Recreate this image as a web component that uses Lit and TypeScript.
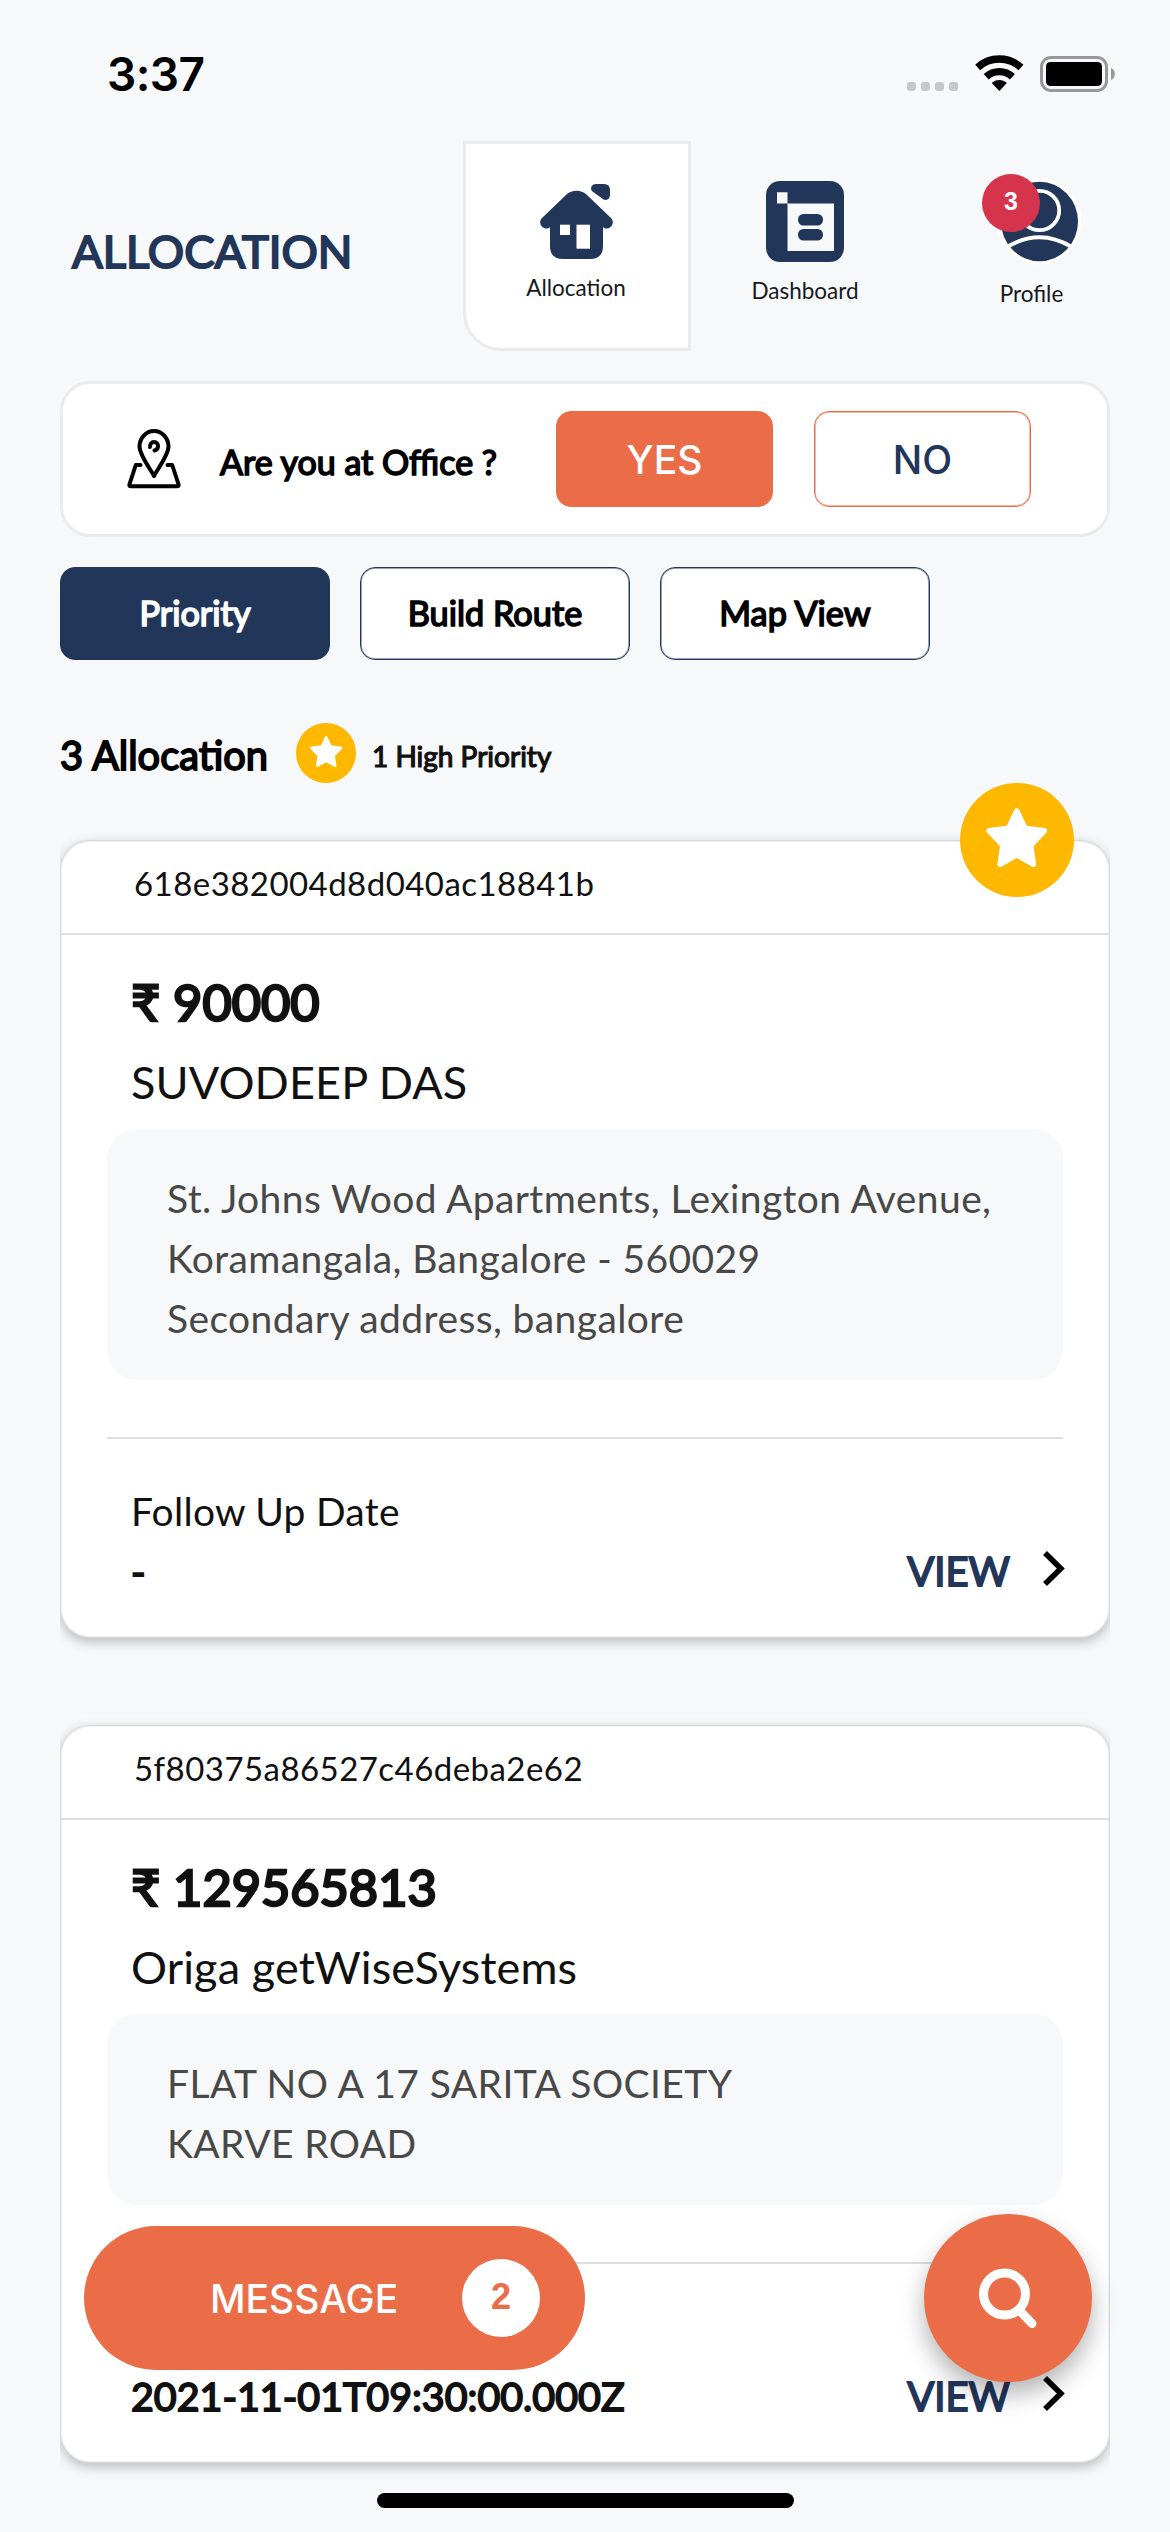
import { LitElement, html, svg, css, nothing } from "lit";
import { customElement, property } from "lit/decorators.js";
import { classMap } from "lit/directives/class-map.js";

interface Allocation {
  id: string;
  amount: string;
  name: string;
  address: string[];
  followUp: string;
  starred: boolean;
  covered: boolean;
}

const allocations: Allocation[] = [
  {
    id: "618e382004d8d040ac18841b",
    amount: "₹ 90000",
    name: "SUVODEEP DAS",
    address: [
      "St. Johns Wood Apartments, Lexington Avenue,",
      "Koramangala, Bangalore - 560029",
      "Secondary address, bangalore",
    ],
    followUp: "-",
    starred: true,
    covered: false,
  },
  {
    id: "5f80375a86527c46deba2e62",
    amount: "₹ 129565813",
    name: "Origa getWiseSystems",
    address: ["FLAT NO A 17 SARITA SOCIETY", "KARVE ROAD"],
    followUp: "2021-11-01T09:30:00.000Z",
    starred: false,
    covered: true,
  },
];

const starShape = svg`<polygon points="30.8,3 38.9,20.3 58.5,22.8 44.7,37.3 47.5,56.3 30.8,46.9 14.1,56.3 16.9,37.3 3.1,22.8 22.7,20.3"
  fill="#fff" stroke="#fff" stroke-width="5.5" stroke-linejoin="round"/>`;

@customElement("star-badge")
class StarBadge extends LitElement {
  static styles = css`
    :host { display: flex; align-items: center; justify-content: center; border-radius: 50%; background: #ffb800; }
    svg { display: block; width: 54%; margin-top: -4%; overflow: visible; }
  `;
  render() {
    return html`<svg viewBox="0 0 61.6 59">${starShape}</svg>`;
  }
}

@customElement("allocation-card")
class AllocationCard extends LitElement {
  @property({ attribute: false }) item!: Allocation;

  static styles = css`
    :host { display: block; color: #111; font-family: Lato, Carlito, sans-serif; clip-path: inset(-60px 0 -30px 0); }
    .card {
      position: relative; box-sizing: border-box; background: #fff; border: 1px solid #d9d9da;
      border-radius: 30px; box-shadow: 0 4px 12px rgba(0, 0, 0, 0.25), inset 0 0 0 1px #f0f0f0;
    }
    .badge { position: absolute; top: -58px; right: 35px; width: 114px; height: 114px; }
    .id { height: 94px; border-bottom: 2px solid #dedede; padding: 20px 0 0 73px; box-sizing: border-box; font-size: 33px; line-height: 44px; letter-spacing: 0.45px; }
    .body { padding: 37px 46px 0; }
    .amount { padding-left: 24px; font-size: 50.5px; line-height: 60px; height: 60px; -webkit-text-stroke: 2.6px currentColor; }
    .name { padding-left: 24px; margin-top: 22px; font-size: 45px; line-height: 56px; letter-spacing: 0.12px; }
    .address { margin-top: 19px; padding: 39px 60px 32px; border-radius: 30px; background: #f7f8fa; color: #484848; font-size: 39px; line-height: 60px; letter-spacing: 0.4px; white-space: nowrap; }
    .rule { height: 2px; margin-top: 57px; background: #dedede; }
    .foot { display: flex; justify-content: space-between; align-items: flex-end; height: 198px; box-sizing: border-box; padding: 42px 0 36px 24px; }
    .label { height: 60px; font-size: 39px; line-height: 60px; letter-spacing: 0.25px; }
    .label.covered { visibility: hidden; }
    .date { font-size: 39.4px; line-height: 60px; -webkit-text-stroke: 1.8px currentColor; }
    .view { display: flex; align-items: center; color: #22365a; font-size: 40px; line-height: 60px; -webkit-text-stroke: 1.8px currentColor; margin-right: -2px; }
    .view svg { width: 22px; height: 35px; margin: -5px 0 0 33px; overflow: visible; }
  `;

  render() {
    const a = this.item;
    return html`
      <div class="card">
        ${a.starred ? html`<star-badge class="badge"></star-badge>` : nothing}
        <div class="id">${a.id}</div>
        <div class="body">
          <div class="amount">${a.amount}</div>
          <div class="name">${a.name}</div>
          <div class="address">${a.address.map((l) => html`<div>${l}</div>`)}</div>
          <div class="rule"></div>
          <div class="foot">
            <div>
              <div class=${classMap({ label: true, covered: a.covered })}>Follow Up Date</div>
              <div class="date">${a.followUp}</div>
            </div>
            <div class="view">
              VIEW
              <svg viewBox="0 0 22 35"><path d="M2 2 17.8 17.5 2 33" fill="none" stroke="#000" stroke-width="5.6"/></svg>
            </div>
          </div>
        </div>
      </div>
    `;
  }
}

@customElement("app-root")
class AppRoot extends LitElement {
  static styles = css`
    :host {
      display: block; position: relative; width: 1170px; height: 2532px; overflow: hidden;
      background: #f7f8fa; font-family: Lato, Carlito, sans-serif; color: #000;
    }
    svg { display: block; overflow: visible; }
    .status { display: flex; justify-content: space-between; height: 141px; box-sizing: border-box; padding: 45px 55px 0 107px; }
    .time { font-family: Inter, "Liberation Sans", sans-serif; font-weight: 600; font-size: 46px; letter-spacing: -0.6px; line-height: 58px; }
    .signals { display: flex; align-items: flex-start; padding-top: 10px; }
    .dots { display: flex; gap: 5px; margin: 27px 17px 0 0; }
    .dots i { width: 9px; height: 9px; border-radius: 3px; background: #c6c7c9; }
    .wifi { margin-right: 16px; }
    .battery { margin-top: 1px; }

    .header { display: flex; height: 210px; }
    .title { width: 463px; box-sizing: border-box; padding: 82px 0 0 72px; font-size: 45.4px; line-height: 56px; color: #22365a; -webkit-text-stroke: 2px currentColor; }
    .tab { width: 228px; box-sizing: border-box; display: flex; flex-direction: column; align-items: center; font-size: 22.5px; line-height: 28px; color: #17181a; }
    .tab.active { background: #fff; border: 3px solid #ebebeb; border-radius: 0 0 0 38px; padding-top: 40px; padding-right: 2px; }
    .tab.active svg { margin-bottom: 15px; }
    .tab.dash { padding-top: 40px; }
    .tab.dash svg { margin-bottom: 15px; }
    .tab.user { width: 225px; padding-top: 37px; }
    .avatar { position: relative; margin: 0 0 15px 17px; }
    .count {
      position: absolute; left: -17px; top: -4px; width: 58px; height: 58px; border-radius: 50%; background: #d6344d;
      color: #fff; font-family: "Liberation Sans", Arial, sans-serif; font-weight: 700; font-size: 25px; line-height: 55px; text-align: center;
    }

    .main { padding: 30px 60px 0; }
    .office { display: flex; align-items: flex-start; height: 156px; box-sizing: border-box; background: #fff; border: 3px solid #ebebeb; border-radius: 30px; padding: 27px 0 0 64px; }
    .office svg { margin-top: 18px; }
    .question { width: 336px; margin: 29px 0 0 39px; font-size: 34px; line-height: 44px; -webkit-text-stroke: 1.6px currentColor; white-space: nowrap; }
    .choice {
      width: 217px; height: 96px; box-sizing: border-box; border-radius: 15px; border: 1px solid #eb6d47; box-shadow: inset 0 0 0 1px rgba(235, 109, 71, 0.5); margin-right: 41px;
      font-family: Inter, "Liberation Sans", sans-serif; font-weight: 500; font-size: 39px; line-height: 95px; text-align: center; color: #22365a;
    }
    .choice.on { background: #eb6d47; color: #fff; }

    .filters { display: flex; gap: 30px; margin-top: 30px; }
    .filter { width: 270px; height: 93px; box-sizing: border-box; border: 1px solid #22365a; box-shadow: inset 0 0 0 1px rgba(34, 54, 90, 0.45); border-radius: 15px; background: #fff; font-size: 34.3px; line-height: 90px; text-align: center; -webkit-text-stroke: 1.6px currentColor; }
    .filter.on { background: #22365a; color: #fff; }

    .summary { display: flex; margin-top: 63px; height: 117px; }
    .total { font-size: 39.8px; line-height: 64px; -webkit-text-stroke: 1.8px currentColor; }
    .mini { width: 60px; height: 60px; margin: 0 16px 0 28px; }
    .high { font-size: 28px; line-height: 67px; color: #111; -webkit-text-stroke: 1.2px currentColor; }
    .cards { display: flex; flex-direction: column; gap: 87px; }

    .message {
      position: absolute; left: 84px; top: 2226px; width: 501px; height: 144px; box-sizing: border-box; border-radius: 72px; background: #eb6d47; color: #fff;
      display: flex; align-items: center; justify-content: space-between; padding: 0 45px 0 126px;
      font-family: Inter, "Liberation Sans", sans-serif; font-weight: 500; font-size: 39px;
    }
    .unread { width: 78px; height: 78px; border-radius: 50%; background: #fff; color: #eb6d47; font-family: "Liberation Sans", Arial, sans-serif; font-weight: 700; font-size: 36px; line-height: 76px; text-align: center; }
    .search {
      position: absolute; left: 924px; top: 2214px; width: 168px; height: 168px; border-radius: 50%; background: #eb6d47;
      box-shadow: 0 12px 24px rgba(0, 0, 0, 0.3); display: flex; align-items: center; justify-content: center;
    }
    .home { position: absolute; left: 377px; top: 2493px; width: 417px; height: 15px; border-radius: 8px; background: #000; }
  `;

  render() {
    return html`
      <div class="status">
        <div class="time">3:37</div>
        <div class="signals">
          <div class="dots"><i></i><i></i><i></i><i></i></div>
          <svg class="wifi" width="49" height="37" viewBox="0 0 49 37">
            <g fill="none" stroke="#000" stroke-width="7.4">
              <path d="M2.7 12.4A32 32 0 0 1 45.9 12.4"/>
              <path d="M11.2 21.7A19.35 19.35 0 0 1 37.4 21.7"/>
            </g>
            <path d="M24.3 36 17.2 28.6C16.8 28 17 27.6 17.6 27.2A11 11 0 0 1 31 27.2C31.6 27.6 31.8 28 31.4 28.6Z"/>
          </svg>
          <svg class="battery" width="75" height="36" viewBox="0 0 75 36">
            <rect x="1.5" y="1.5" width="65" height="33" rx="9.5" fill="none" stroke="#97989a" stroke-width="3"/>
            <rect x="6" y="6" width="56" height="24" rx="4.5"/>
            <path d="M71 12C76 13.5 76 22.5 71 24Z" fill="#97989a"/>
          </svg>
        </div>
      </div>

      <div class="header">
        <div class="title">ALLOCATION</div>
        <div class="tab active">
          <svg width="73" height="75" viewBox="0 0 73 75" fill="#22365a">
            <path d="M10 43V62Q10 75 23 75H50Q63 75 63 62V43C65 45 68 45 70.5 43C73.5 40.5 73.5 36.5 71 34L46.5 10.5C41 5.5 32 5.5 26.5 10.5L2 34C-.5 36.5-.5 40.5 2.5 43C5 45 8 45 10 43Z"/>
            <path d="M56 0H64Q70 0 70 6V11C70 16 65 17.5 61.5 14L52.5 7.5C49.5 5 51.5 0 56 0Z"/>
            <rect x="20" y="40.7" width="10" height="10.3" fill="#fff"/>
            <rect x="36.5" y="40.7" width="13.5" height="24" fill="#fff"/>
          </svg>
          Allocation
        </div>
        <div class="tab dash">
          <svg width="78" height="81" viewBox="0 0 78 81" fill="#22365a">
            <rect width="78" height="81" rx="14"/>
            <path d="M11 11.3H21.5V22.5H68V70H21.5V22.5H11Z" fill="#f7f8fa"/>
            <rect x="32" y="33" width="25" height="11.5" rx="5.5"/>
            <rect x="32" y="48" width="25" height="11.5" rx="5.5"/>
          </svg>
          Dashboard
        </div>
        <div class="tab user">
          <div class="avatar">
            <svg width="82" height="87" viewBox="0 0 82 87">
              <ellipse cx="40.5" cy="43.5" rx="42" ry="43" fill="#fff"/>
              <ellipse cx="40.5" cy="43.5" rx="38.5" ry="39.7" fill="#22365a"/>
              <circle cx="40.5" cy="32.5" r="19.7" fill="none" stroke="#fff" stroke-width="3.8"/>
              <path d="M9 68.5Q40.5 50 72 68.5" fill="none" stroke="#fff" stroke-width="4"/>
            </svg>
            <div class="count">3</div>
          </div>
          Profile
        </div>
      </div>

      <div class="main">
        <div class="office">
          <svg width="54" height="60" viewBox="0 0 54 60" fill="none" stroke="#000" stroke-width="4" stroke-linecap="round" stroke-linejoin="round">
            <path d="M27 47C24 41 12.5 26 12.5 17.5A14.5 15.5 0 0 1 41.5 17.5C41.5 26 30 41 27 47Z"/>
            <path d="M23 18C22.5 11.5 31.5 11.5 31 17.5C30.8 19.5 29.5 21 27.5 21.5"/>
            <path d="M13.5 36H8.8L2.4 55.5Q2 57.3 4 57.3H50Q52 57.3 51.6 55.5L45.2 36H40.5"/>
          </svg>
          <div class="question">Are you at Office ?</div>
          <div class="choice on">YES</div>
          <div class="choice">NO</div>
        </div>

        <div class="filters">
          <div class="filter on">Priority</div>
          <div class="filter">Build Route</div>
          <div class="filter">Map View</div>
        </div>

        <div class="summary">
          <div class="total">3 Allocation</div>
          <star-badge class="mini"></star-badge>
          <div class="high">1 High Priority</div>
        </div>

        <div class="cards">
          ${allocations.map((a) => html`<allocation-card .item=${a}></allocation-card>`)}
        </div>
      </div>

      <div class="message"><span>MESSAGE</span><span class="unread">2</span></div>
      <div class="search">
        <svg width="60" height="60" viewBox="0 0 60 60" fill="none" stroke="#fff" stroke-width="9" stroke-linecap="round">
          <circle cx="26.5" cy="26" r="21"/>
          <path d="M42 43 54 55.5"/>
        </svg>
      </div>
      <div class="home"></div>
    `;
  }
}
